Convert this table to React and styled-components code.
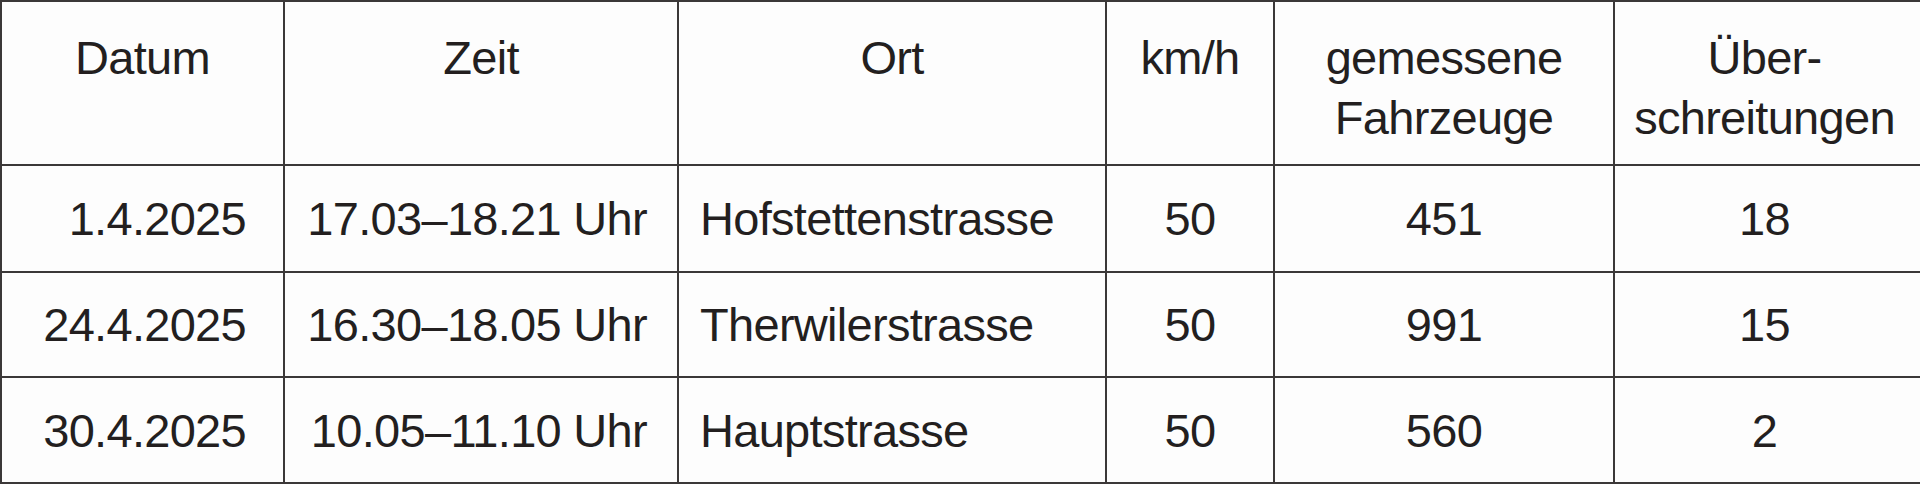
import styled, { createGlobalStyle } from "styled-components";

const GlobalStyle = createGlobalStyle`
  html, body {
    margin: 0;
    padding: 0;
    background: #fdfdfd;
  }
  body {
    font-family: "Liberation Sans", Arial, sans-serif;
    color: #231f1f;
  }
`;

const rows = [
  ["1.4.2025", "17.03–18.21 Uhr", "Hofstettenstrasse", "50", "451", "18"],
  ["24.4.2025", "16.30–18.05 Uhr", "Therwilerstrasse", "50", "991", "15"],
  ["30.4.2025", "10.05–11.10 Uhr", "Hauptstrasse", "50", "560", "2"],
];

// alignment and side padding for each column
const cols = [
  { align: "flex-end", pad: "0 37px 0 0" },
  { align: "flex-end", pad: "0 30px 0 0" },
  { align: "flex-start", pad: "0 0 0 21px" },
  { align: "center", pad: "0" },
  { align: "center", pad: "0" },
  { align: "center", pad: "0 6px 0 0" },
];

export default function App() {
  return (
    <>
      <GlobalStyle />
      <Table>
        <HeadCell>Datum</HeadCell>
        <HeadCell>Zeit</HeadCell>
        <HeadCell>Ort</HeadCell>
        <HeadCell>km/h</HeadCell>
        <HeadCell>
          gemessene
          <br />
          Fahrzeuge
        </HeadCell>
        <HeadCell $last>
          Über-
          <br />
          schreitungen
        </HeadCell>
        {rows.map((row, r) =>
          row.map((val, c) => (
            <Cell
              key={`${r}-${c}`}
              $align={cols[c].align}
              $pad={cols[c].pad}
              $last={c === 5}
            >
              {val}
            </Cell>
          ))
        )}
      </Table>
    </>
  );
}

const Table = styled.div`
  display: grid;
  grid-template-columns: 283px 394px 428px 168px 340px 1fr;
  grid-template-rows: 164px 107px 105px 106px;
  border-top: 2px solid #3b3838;
  border-left: 2px solid #3b3838;
  width: 1920px;
  box-sizing: border-box;
  font-size: 47px;
  letter-spacing: -0.7px;
`;

const HeadCell = styled.div`
  box-sizing: border-box;
  border-right: ${(p) => (p.$last ? "none" : "2px solid #3b3838")};
  border-bottom: 2px solid #3b3838;
  padding-top: 26px;
  padding-right: ${(p) => (p.$last ? "6px" : "0")};
  text-align: center;
  line-height: 60px;
`;

const Cell = styled.div`
  box-sizing: border-box;
  border-right: ${(p) => (p.$last ? "none" : "2px solid #3b3838")};
  border-bottom: 2px solid #3b3838;
  display: flex;
  align-items: center;
  justify-content: ${(p) => p.$align};
  padding: ${(p) => p.$pad};
  white-space: nowrap;
`;
